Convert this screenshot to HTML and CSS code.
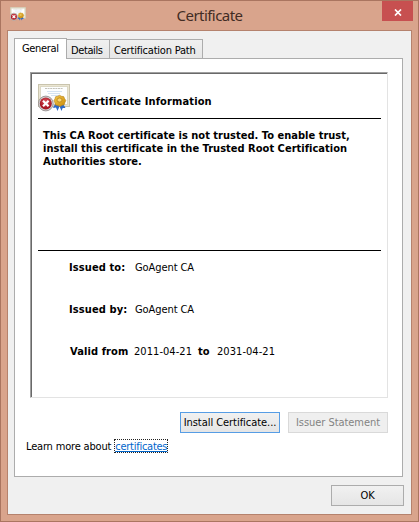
FILE: index.html
```html
<!DOCTYPE html>
<html lang="en">
<head>
<meta charset="utf-8">
<title>Certificate</title>
<link rel="stylesheet" href="styles.css">
</head>
<body>
<svg class="defs" width="0" height="0" aria-hidden="true">
  <defs>
    <linearGradient id="gold" x2="1" y2="1"><stop stop-color="#f4c94b"/><stop offset="1" stop-color="#c98a08"/></linearGradient>
    <radialGradient id="red" cy=".35"><stop stop-color="#dc5961"/><stop offset="1" stop-color="#a91824"/></radialGradient>
    <symbol id="cert" viewBox="0 0 32 28">
      <rect x=".5" y=".5" width="31" height="22" fill="#eae5d2" stroke="#c9c4ad"/>
      <rect x="2.5" y="2.5" width="27" height="18" fill="#fdfefe" stroke="#dcd8c4"/>
      <path d="M7 4.5h18" stroke="#c4c3ba" stroke-dasharray="2 .6"/>
      <path d="M9 7.5h15M10 9.500h12M13 11.500h8" stroke="#c9dced" stroke-width=".8"/>
      <path d="M18 18l-3 6 3-.5 1.500 3.500 3-7zM24 18l3.500 6-2.800 0-1.200 3-3-7z" fill="#2d69c7"/>
      <path d="M21.500 11.300l2 1 2.200.3.900 2 1.200 1.900-.9 2-.7 2.200-2.200.6-2 1.200-2.200-.9-2.300-.6-.6-2.200-1-2 1.100-2 .6-2.100 2.200-.5z" fill="url(#gold)" stroke="#b7811a" stroke-width=".6"/>
      <ellipse cx="21.500" cy="16" rx="2.500" ry="2" fill="#f9d771" stroke="#a87113" stroke-width=".6"/>
      <circle cx="7.800" cy="19.500" r="7.400" fill="#d3d3d3" stroke="#8e8585" stroke-width=".8"/>
      <circle cx="7.800" cy="19.500" r="6" fill="url(#red)"/>
      <path d="M5 16.700l5.600 5.600m0-5.600L5 22.300" stroke="#fff" stroke-width="2.200"/>
    </symbol>
  </defs>
</svg>
<div class="window">
  <header class="titlebar">
    <svg class="title-icon"><use href="#cert"/></svg>
    <h1>Certificate</h1>
    <button class="close" aria-label="Close"><svg viewBox="0 0 8 7"><path d="M1 .5l6 6M7 .5l-6 6" stroke="#fff" stroke-width="1.700"/></svg></button>
  </header>
  <main class="client">
    <nav class="tabs">
      <span class="tab active">General</span>
      <span class="tab details">Details</span>
      <span class="tab path">Certification Path</span>
    </nav>
    <section class="panel">
      <div class="sheet">
        <div class="heading">
          <svg class="cert-icon"><use href="#cert"/></svg>
          <h2>Certificate Information</h2>
        </div>
        <p class="message">This CA Root certificate is not trusted. To enable trust,<br>install this certificate in the Trusted Root Certification<br>Authorities store.</p>
        <dl class="facts">
          <div class="fact"><dt>Issued to:</dt><dd>GoAgent CA</dd></div>
          <div class="fact"><dt>Issued by:</dt><dd>GoAgent CA</dd></div>
          <div class="fact valid"><dt>Valid from</dt><dd class="from">2011-04-21</dd><dt class="to">to</dt><dd>2031-04-21</dd></div>
        </dl>
      </div>
      <div class="actions">
        <button class="btn focus">Install Certificate...</button>
        <button class="btn disabled" disabled>Issuer Statement</button>
      </div>
      <p class="learn"><span>Learn more about</span><a>certificates</a></p>
    </section>
    <footer><button class="btn ok">OK</button></footer>
  </main>
</div>
</body>
</html>
```
FILE: styles.css
```css
* { box-sizing: border-box; margin: 0; padding: 0; }
body { width: 419px; height: 522px; overflow: hidden; color: #000; font: 11px/13px "DejaVu Sans Condensed", "DejaVu Sans", sans-serif; font-stretch: condensed; white-space: nowrap; }
svg { display: block; }
.defs { position: absolute; }
.window { width: 419px; height: 522px; background: #d9a48c; border: 1px solid #aa7560; padding: 0 6px; }
.titlebar { height: 29px; display: grid; grid-template-columns: 100px 1fr 100px; align-items: start; }
.title-icon { width: 16px; height: 14px; margin: 6px 0 0 3px; }
h1 { font: 400 15px/29px "Noto Sans", "Open Sans", sans-serif; font-stretch: normal; letter-spacing: -.55px; text-align: center; color: #422c24; }
.close { width: 31px; height: 20px; justify-self: end; margin-right: -1px; border: 0; background: #c75050; display: flex; align-items: center; justify-content: center; }
.close svg { width: 8px; height: 7px; margin-top: 2px; }
.client { width: 405px; height: 485px; background: #f0f0f0; border: 1px solid #b5826d; padding: 7px 6px 0; }
.tabs { display: flex; align-items: flex-end; height: 20px; letter-spacing: -.2px; }
.tab { height: 19px; border: 1px solid #acacac; border-left: 0; border-bottom: 0; background: linear-gradient(#f0f0f0, #e7e7e7); padding: 4px 0 0 5px; }
.tab.active { width: 53px; height: 21px; border-left: 1px solid #acacac; background: #fff; padding: 3px 0 0 7px; margin-bottom: -1px; z-index: 1; letter-spacing: -.35px; }
.details { width: 43px; padding-left: 4px; letter-spacing: -.4px; }
.path { width: 93px; padding-left: 4px; }
.panel { width: 389px; height: 419px; background: #fff; border: 1px solid #acacac; padding: 13px 14px 0 15px; }
.sheet { width: 358px; height: 326px; border: 1px solid #a0a0a0; border-right-color: #e3e3e3; border-bottom-color: #e3e3e3; box-shadow: inset 1px 1px #696969; padding: 10px 6px 0 7px; }
.heading { display: flex; height: 36px; border-bottom: 1px solid #000; }
.cert-icon { width: 32px; height: 28px; margin-top: 1px; }
h2 { font-size: 11px; line-height: 13px; margin: 12px 0 0 11px; letter-spacing: .13px; }
.message { height: 132px; padding: 10px 0 0 5px; font-weight: 700; letter-spacing: .02px; border-bottom: 1px solid #000; }
.facts { padding: 10px 0 0 31px; }
.fact { display: flex; height: 42px; }
dt { width: 66px; font-weight: 700; letter-spacing: .1px; }
dd { letter-spacing: -.08px; }
.valid dd { letter-spacing: .05px; }
.valid dt { width: 65px; padding-left: 1px; }
.valid .from { width: 64px; }
.valid .to { width: 19px; padding: 0; }
.actions { display: flex; gap: 8px; justify-content: flex-end; margin-top: 14px; }
.btn { width: 100px; height: 21px; font: inherit; letter-spacing: -.05px; color: #000; border: 1px solid #acacac; background: linear-gradient(#f1f1f1, #e5e5e5); }
.focus { border-color: #569de5; }
.disabled { color: #838383; border-color: #d9d9d9; background: #efefef; }
.learn { display: flex; margin: 7px 0 0 -4px; letter-spacing: -.18px; }
.learn a { color: #0066cc; text-decoration: underline; outline: 1px dotted #222; margin-left: 4px; width: 52px; height: 12px; letter-spacing: -.25px; }
footer { display: flex; justify-content: flex-end; padding: 8px 1px 0 0; }
.ok { width: 73px; }
```
